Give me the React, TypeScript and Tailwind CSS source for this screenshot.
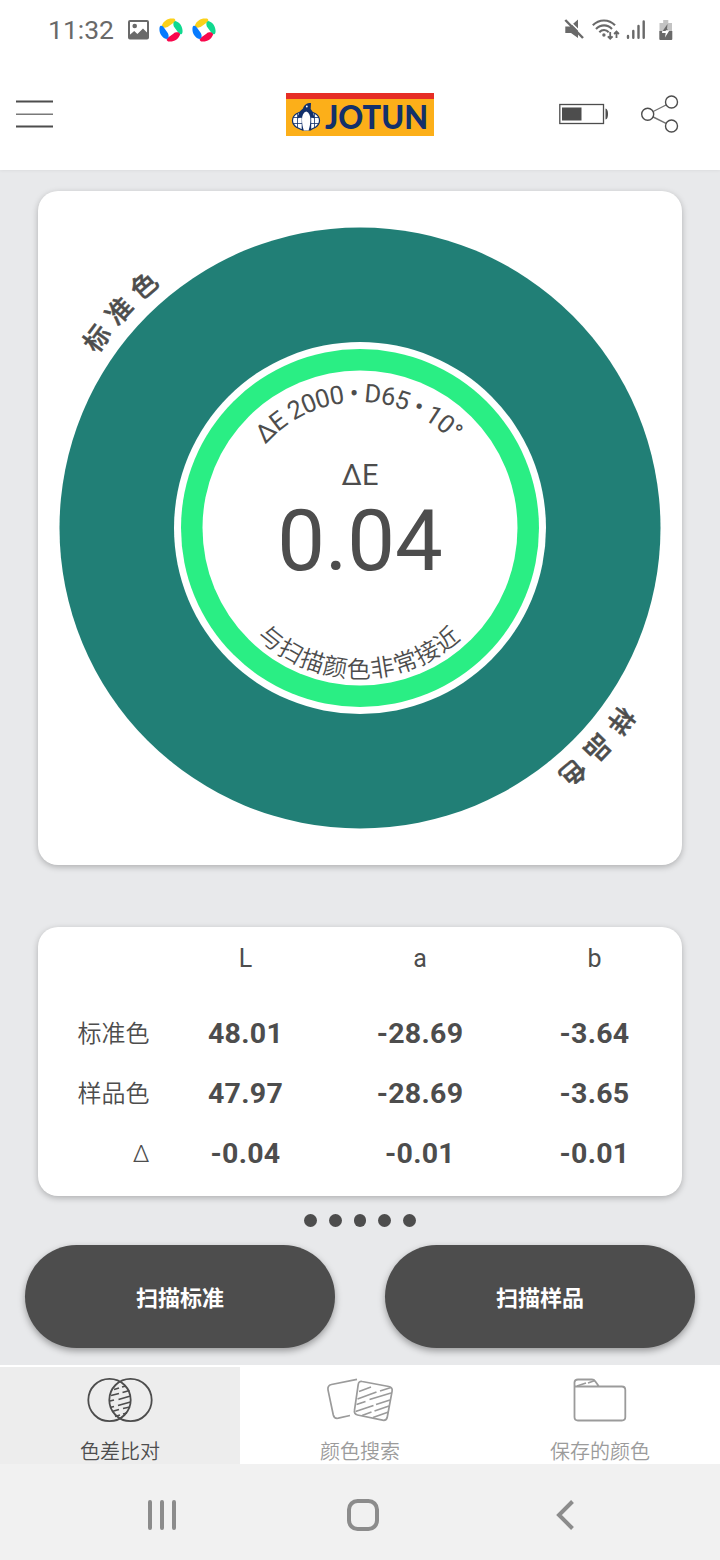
import { clsx } from "clsx"

const rows = [
  { label: "标准色", values: ["48.01", "-28.69", "-3.64"] },
  { label: "样品色", values: ["47.97", "-28.69", "-3.65"] },
  { label: "Δ", values: ["-0.04", "-0.01", "-0.01"] },
]

const tabs = [
  { title: "色差比对", icon: CompareIcon, active: true },
  { title: "颜色搜索", icon: SearchColorIcon, active: false },
  { title: "保存的颜色", icon: FolderIcon, active: false },
]

const petals = [
  { color: "#fbd11b", angle: 0 },
  { color: "#10d98f", angle: 90 },
  { color: "#f8084c", angle: 180 },
  { color: "#077bff", angle: 270 },
]

function PinwheelIcon() {
  return (
    <svg width="24" height="24" viewBox="0 0 24 24">
      {petals.map((petal) => (
        <path
          key={petal.angle}
          d="M2.900 7.500C4.600 2.500 9.500-.3 14.800.6 16.800 1.200 16.700 3.200 15.300 4.300L9.300 8.600C7.500 9.900 3.500 10.400 2.900 7.500Z"
          fill={petal.color}
          transform={`rotate(${petal.angle} 12 12)`}
        />
      ))}
    </svg>
  )
}

function StatusBar() {
  return (
    <div className="flex h-[60px] items-center pr-[46px] pl-[48px] text-[#696969]">
      <span className="w-[80px] text-[26.500px] leading-[60px]">11:32</span>
      <svg width="22" height="20" viewBox="0 0 22 20" fill="none">
        <rect x="1" y="1" width="19" height="17.500" rx="1" stroke="currentColor" strokeWidth="2" />
        <circle cx="6.700" cy="6" r="2.300" fill="currentColor" />
        <path d="M1 15.500 6.200 11l3.200 3L15 8.500l5 5V18H1Z" fill="currentColor" />
      </svg>
      <div className="ml-[9px] flex gap-[9px]">
        <PinwheelIcon />
        <PinwheelIcon />
      </div>

      <div className="ml-auto flex items-center">
        <svg width="20" height="22" viewBox="0 0 20 22">
          <path d="M1.300 7.500H6l8-7v18.500l-7-5H1.300Z" fill="currentColor" />
          <path d="M2.500-.8 20.500 17" stroke="#fff" strokeWidth="1.600" />
          <path d="M1.300 1 19 19" stroke="currentColor" strokeWidth="2.400" />
        </svg>
        <svg className="ml-[8px]" width="28" height="22" viewBox="0 0 28 22" fill="none" stroke="currentColor" strokeWidth="2.100">
          <path d="M.8 6.300C7-.2 17-.2 23 6.300M4 10C8.700 5.200 15.500 5.200 20 10M7.300 13.200c2.800-2.900 6.800-2.900 9.400 0" />
          <circle cx="11.900" cy="16" r="1.700" fill="currentColor" stroke="none" />
          <path d="M18.200 13v7M15.800 17.300l2.400 2.400 2.400-2.400M24.500 19v-6M22.100 15l2.400-2.400L26.900 15" strokeWidth="1.800" />
        </svg>
        <svg className="ml-[6px]" width="20" height="22" viewBox="0 0 20 22" stroke="currentColor" strokeWidth="2.400" strokeLinecap="round">
          <path d="M2 17v1.800M7.300 12v6.800M12.500 7v11.800M17.700 2.500v16.300" />
        </svg>
        <svg className="ml-[12px]" width="16" height="22" viewBox="0 0 16 22">
          <path d="M1.500 4h3.700V1h5.100v3h3.700v8h-12.500Z" fill="#c3c3c3" />
          <path d="M1.300 12h13v8a1 1 0 0 1-1 1h-11a1 1 0 0 1-1-1Z" fill="currentColor" />
          <path d="M9.500 5 4 13h3l1-1H11L9 10Z" fill="currentColor" />
          <path d="M4.300 12H7.500l.5-.8h3.500L7 18.500l.7-4.500H4Z" fill="#fff" />
        </svg>
      </div>
    </div>
  )
}

function JotunLogo() {
  return (
    <svg width="148" height="43" viewBox="0 0 148 43" className="overflow-visible">
      <rect width="148" height="43" fill="#fcaf19" />
      <rect width="148" height="6" fill="#e62e26" />
      <ellipse cx="20" cy="27.500" rx="13.500" ry="9.500" fill="#fff" stroke="#12306b" strokeWidth="1.200" />
      <path d="M7 24.500h26M7 30.500h26M11.500 20v15M28.500 20v15" stroke="#12306b" strokeWidth=".8" fill="none" />
      <path d="M12 22.500c1.500-4 3-5.500 5-7 1-3.500 3.500-5.500 8-5.500l-.3 6c2 2.500 3.500 5.500 3.500 9.500-1-1-2-1.500-3-1.500v13.500h-9.500V24c-1.500 0-2.700.5-3.700 1.500Z" fill="#12306b" />
      <path d="M20.200 18.500c3 1 4.200 4 4.200 8 0 4-.8 8-1.800 11h-4.800c-1-3-1.800-7-1.800-11 0-4 1.200-7 4.200-8Z" fill="#fff" />
      <circle cx="20.800" cy="13.500" r=".9" fill="#fff" />
      <text x="39" y="36" textLength="103" lengthAdjust="spacingAndGlyphs" className="fill-[#12306b] font-['Lato'] text-[33px] font-black">
        JOTUN
      </text>
    </svg>
  )
}

function AppBar() {
  return (
    <div className="relative flex h-[110px] items-center justify-between pr-[41px] pb-[3px] pl-[16px] text-[#4d4d4d]">
      <svg width="37" height="30" viewBox="0 0 37 30" stroke="currentColor">
        <path d="M0 2.500h37M0 27.500h37" strokeWidth="2" />
        <path d="M0 15.200h37" strokeWidth="1.500" className="opacity-75" />
      </svg>
      <div className="absolute top-[33px] left-[286px]">
        <JotunLogo />
      </div>
      <div className="flex items-center gap-[32px]">
        <svg width="50" height="24" viewBox="0 0 50 24" fill="none">
          <rect x=".8" y="2.500" width="43.700" height="19" stroke="currentColor" strokeWidth="1.300" />
          <rect x="3" y="5.500" width="19.500" height="13" fill="currentColor" />
          <path d="M46.500 6.500q2.500.5 2.500 5.500t-2.500 5.500Z" fill="currentColor" />
        </svg>
        <svg width="38" height="38" viewBox="0 0 38 38" fill="none" stroke="currentColor" strokeWidth="1.400">
          <circle cx="6.700" cy="19.300" r="6" />
          <circle cx="30.500" cy="7" r="6" />
          <circle cx="30.500" cy="31" r="6" />
          <path d="m12.200 16.500 12.800-6.500M12.200 22 25 28.300" className="opacity-80" />
        </svg>
      </div>
    </div>
  )
}

function ColorWheel() {
  return (
    <div className="mx-[38px] mt-[21px] h-[674px] rounded-[20px] bg-white shadow-[0_2px_6px_rgba(0,0,0,0.25)]">
      <svg width="644" height="674" viewBox="-322 -337 644 674" className="fill-[#4d4d4d]">
        <defs>
          <path id="outer" d="M-315 0A315 315 0 0 1 315 0" />
          <path id="innerTop" d="M-126 0A126 126 0 0 1 126 0" />
          <path id="innerBottom" d="M-150 0A150 150 0 0 0 150 0" />
        </defs>
        <circle r="300.500" className="fill-[#217f76]" />
        <circle r="186" className="fill-white" />
        <circle r="179" className="fill-[#2aee84]" />
        <circle r="157.500" className="fill-white" />

        {/* Sector labels */}
        <text transform="rotate(-47.200)" textAnchor="middle" strokeWidth=".5" className="stroke-[#4d4d4d] text-[26px] font-medium tracking-[8.500px]">
          <textPath href="#outer" startOffset="50%">标准色</textPath>
        </text>
        <text transform="rotate(133.500)" textAnchor="middle" strokeWidth=".5" className="stroke-[#4d4d4d] text-[26px] font-medium tracking-[8.500px]">
          <textPath href="#outer" startOffset="50%">样品色</textPath>
        </text>

        <text transform="rotate(-1)" textAnchor="middle" className="text-[25.500px] tracking-[-0.700px]">
          <textPath href="#innerTop" startOffset="50%">ΔE 2000 • D65 • 10°</textPath>
        </text>
        <text y="-43" textAnchor="middle" className="text-[29px]">ΔE</text>
        <text x="0" y="42" textAnchor="middle" className="text-[85px]">0.04</text>
        <text transform="rotate(.3)" textAnchor="middle" className="text-[24px] font-[350] tracking-[1.100px]">
          <textPath href="#innerBottom" startOffset="50%">与扫描颜色非常接近</textPath>
        </text>
      </svg>
    </div>
  )
}

function LabTable() {
  return (
    <div className="mx-[38px] mt-[62px] h-[269px] rounded-[20px] bg-white shadow-[0_2px_6px_rgba(0,0,0,0.25)]">
      <div className="grid h-[76.500px] grid-cols-[120px_175px_174px_175px] text-center text-[25px] leading-[63px]">
        <span />
        <span>L</span>
        <span>a</span>
        <span>b</span>
      </div>
      {rows.map((row) => (
        <div key={row.label} className="grid h-[60.300px] grid-cols-[120px_175px_174px_175px] text-center leading-[60px]">
          <span className="pr-[8.500px] text-right text-[24px] font-[350]">{row.label}</span>
          {row.values.map((value, i) => (
            <span key={i} className="text-[28.500px] font-bold tracking-[0.300px]">{value}</span>
          ))}
        </div>
      ))}
    </div>
  )
}

function CompareIcon() {
  return (
    <svg width="68" height="46" viewBox="0 0 68 46" fill="none" stroke="currentColor" strokeWidth="1.800">
      <circle cx="23.500" cy="23" r="21.200" />
      <circle cx="44.500" cy="23" r="21.200" />
      <path d="m28 12.500 5-1.500m3-1 4-1M25 18.500l8-2m3.500-1 7-2M24 24l4-1m4.500-.5 12-3.500M24 30.500 28 29.500m4-1 12.500-3.500M26 34.500l7-2m4-1 7-1.500M29 39.500l5-1.500m3-1 4-1" strokeWidth="1.700" />
    </svg>
  )
}

function SearchColorIcon() {
  return (
    <svg width="68" height="46" viewBox="0 0 68 46" fill="none" stroke="currentColor" strokeWidth="1.700">
      <path d="M31 2.300 5.500 7.500Q1.300 8.500 2 12.800L7.300 38q1 4 5 3.200L24 38.500" />
      <path d="m36.200 4.500 26.600 5q4 .8 3.300 4.700L61.300 40q-.8 4-4.800 3.200L31.500 38q-3.800-.8-3-4.800l3.700-25.500q.6-4 4-3.200Z" />
      <path d="M33 14.500 45 10M54 14l11-3.500M31.500 22 50.500 15M30.500 27.500l9-3M43.500 22.500 65 16M29.500 34.500l18-6M50 27.500L64 23M36 38.500l9.500-3.500M48.500 34l14.500-5M47 40.500l15.500-5.500" strokeWidth="1.600" />
    </svg>
  )
}

function FolderIcon() {
  return (
    <svg width="68" height="46" viewBox="0 0 68 46" fill="none" stroke="currentColor" strokeWidth="1.800">
      <path d="M9.300 9.500h46.500q3.500 0 3.500 3.500v27q0 3.500-3.500 3.500H12q-3.500 0-3.500-3.500V5.500Q8.500 2.500 12 2.500h14q2 0 3 1.500l4 5.500" />
      <path d="m11 9 9-3M22 6l7-2.500" strokeWidth="1.700" />
    </svg>
  )
}

function TabBar() {
  return (
    <div className="grid h-[99px] grid-cols-3 bg-white">
      {tabs.map((tab) => {
        const Icon = tab.icon

        return (
          <div
            key={tab.title}
            className={clsx(
              "flex flex-col items-center border-t-2 border-white pt-[10px]",
              tab.active ? "bg-[#ededed] text-[#4d4d4d]" : "text-[#9b9b9b]"
            )}
          >
            <Icon />
            <span className="mt-[15px] h-[26px] text-[20px] leading-[28px] font-[350]">{tab.title}</span>
          </div>
        )
      })}
    </div>
  )
}

function NavigationBar() {
  return (
    <div className="flex h-[96px] items-center bg-[#f1f1f1] pt-[6px] pl-[146px] text-[#8c8c8c]">
      <svg width="32" height="32" viewBox="0 0 32 32" stroke="currentColor" strokeWidth="4" strokeLinecap="round">
        <path d="M4 3v26M16 3v26M28 3v26" />
      </svg>
      <svg className="ml-[168px]" width="34" height="34" viewBox="0 0 34 34" fill="none">
        <rect x="3" y="3" width="28" height="28" rx="8.500" stroke="currentColor" strokeWidth="4" />
      </svg>
      <svg className="ml-[174px]" width="24" height="34" viewBox="0 0 24 34" fill="none" stroke="currentColor" strokeWidth="4">
        <path d="M18.500 3.500 5 17l13.500 13.500" />
      </svg>
    </div>
  )
}

export default function App() {
  return (
    <div className="h-[1560px] w-[720px] overflow-hidden bg-[#e8e9eb] font-['Roboto','Noto_Sans_CJK_SC',sans-serif] text-[#4d4d4d]">
      <div className="bg-white shadow-[0_1px_3px_rgba(0,0,0,0.05)]">
        <StatusBar />
        <AppBar />
      </div>

      <ColorWheel />
      <LabTable />

      {/* Pager */}
      <div className="mt-[18px] flex h-[12px] justify-center gap-[12px]">
        {[0, 1, 2, 3, 4].map((dot) => (
          <span key={dot} className="h-[12.800px] w-[12.800px] rounded-full bg-[#4d4d4d]" />
        ))}
      </div>

      <div className="mt-[19px] mb-[17px] grid grid-cols-2 gap-[50px] px-[25px]">
        <button className="h-[103px] rounded-full bg-[#4d4d4d] pt-[3px] text-[22px] font-bold text-white shadow-[0_3px_7px_rgba(0,0,0,0.35)]">扫描标准</button>
        <button className="h-[103px] rounded-full bg-[#4d4d4d] pt-[3px] text-[22px] font-bold text-white shadow-[0_3px_7px_rgba(0,0,0,0.35)]">扫描样品</button>
      </div>

      <TabBar />
      <NavigationBar />
    </div>
  )
}
